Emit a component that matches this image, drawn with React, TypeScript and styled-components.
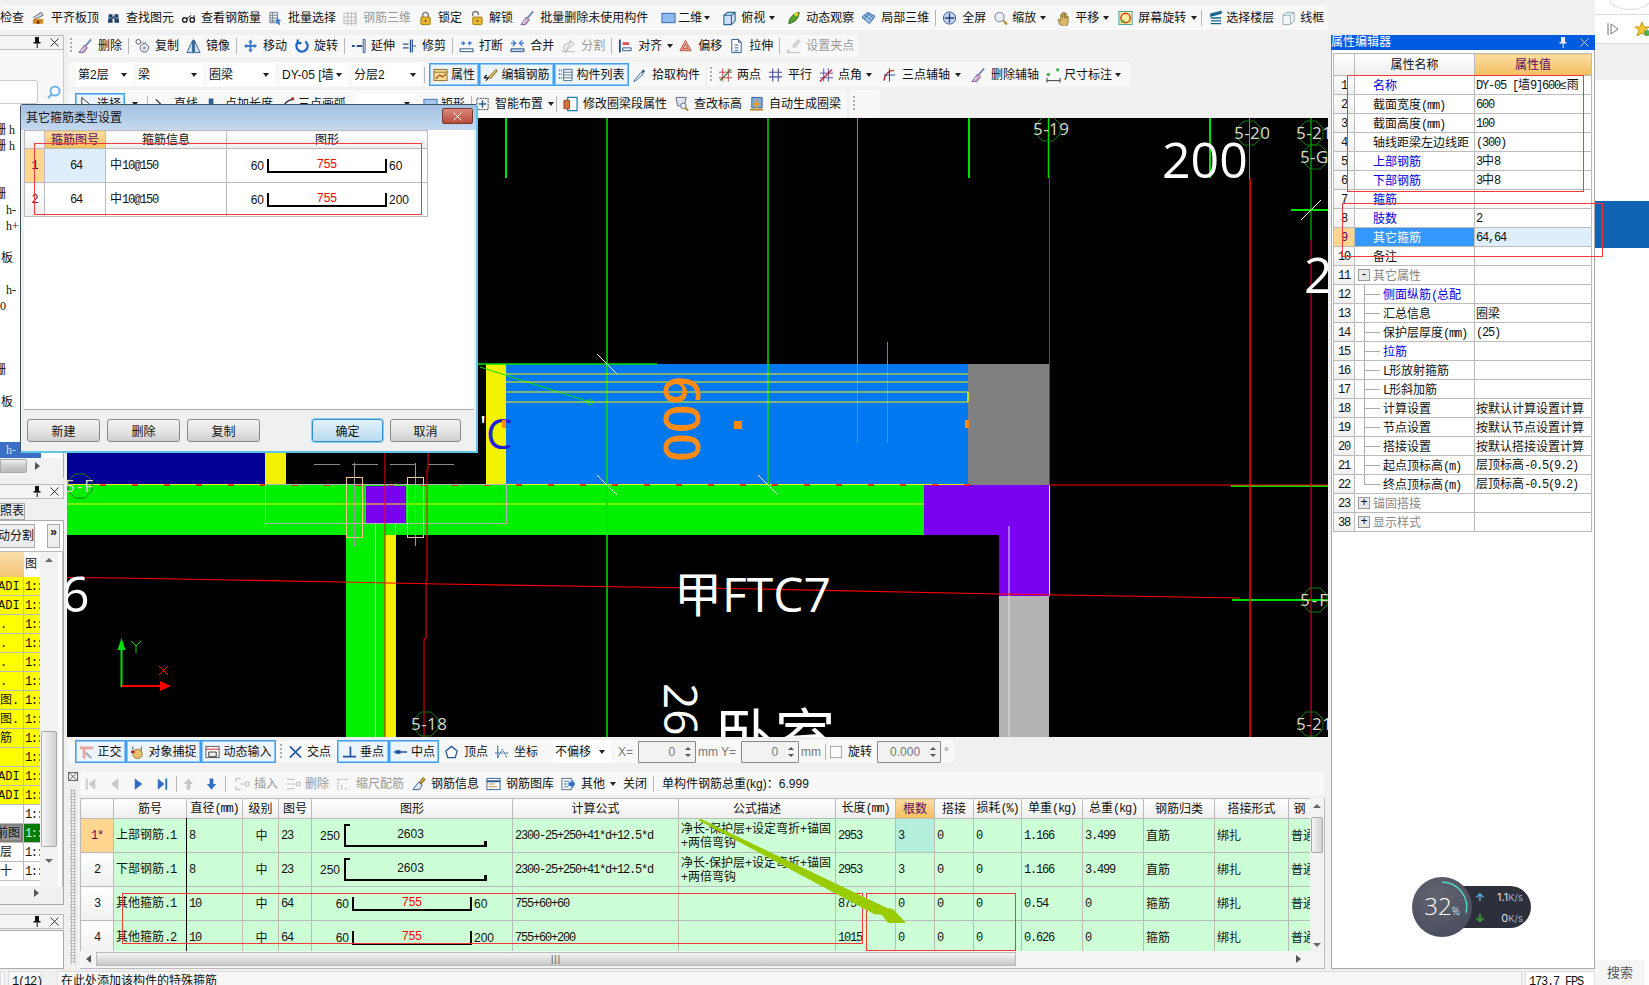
import React from 'react';
import styled, { createGlobalStyle } from 'styled-components';

const Global = createGlobalStyle`
  html, body { margin: 0; padding: 0; background: #f0f0f0; overflow: hidden; }
  * { box-sizing: border-box; }
  #root { width: 1649px; height: 985px; }
`;
const FONT = `"Liberation Sans", "Noto Sans CJK SC", sans-serif`;

const Page = styled.div`position: relative; width: 1649px; height: 985px; overflow: hidden; display: flex; background: #f0f0f0; font: 12px/16px ${FONT}; color: #111;`;
const Shell = styled.div`width: 1595px; height: 985px; display: flex; flex-direction: column;`;
const TopBar = styled.div`height: 35px; padding: 5px 267px 5px 0; flex: none;`;
const Band = styled.div<{ $w?: number; $h: number; $gap?: number; $pl?: number; $mt?: number }>`
  display: flex; align-items: center; height: ${p => p.$h}px; width: ${p => (p.$w ? p.$w + 'px' : 'auto')}; margin-top: ${p => p.$mt ?? 0}px;
  gap: ${p => p.$gap ?? 7}px; padding-left: ${p => p.$pl ?? 0}px; background: #f8f8f8; border-radius: 3px; white-space: nowrap; flex: none; overflow: hidden;
`;
const Body = styled.div`height: 935px; display: flex; flex: none;`;
const Center = styled.div`width: 1264px; padding: 0 3px 0 0; display: flex; flex-direction: column; margin-left: 3px;`;
const BandRow = styled.div<{ $mt?: number; $gap?: number }>`display: flex; margin: ${p => p.$mt ?? 0}px 0 0 1px; gap: ${p => p.$gap ?? 2}px; flex: none;`;
const Grip = styled.i`flex: none; width: 2px; height: 16px; margin: 0 -1px 0 -1px; background-image: linear-gradient(#aaa 50%, transparent 50%); background-size: 2px 4px;`;
const Sep = styled.i<{ $ml?: number }>`flex: none; width: 1px; height: 16px; margin: 0 -1px 0 ${p => p.$ml ?? -1}px; background: #b5b5b5;`;
const ToolItem = styled.span<{ $gray?: boolean; $g?: number; $ml?: number }>`display: inline-flex; align-items: center; gap: ${p => p.$g ?? 5}px; flex: none; margin-left: ${p => p.$ml ?? 0}px; color: ${p => (p.$gray ? '#9a9a9a' : '#111')};`;
const CaretMark = styled.i<{ $r?: number }>`flex: none; width: 0; height: 0; margin: 0 ${p => p.$r ?? 3}px 0 0; border: 3px solid transparent; border-top: 4px solid #222; border-bottom: 0;`;
const IconSvg = styled.svg`width: 15px; height: 16px; flex: none; display: block;`;
const SelectBox = styled.span<{ $w: number; $ml?: number }>`display: flex; align-items: center; justify-content: space-between; flex: none; width: ${p => p.$w}px; height: 23px; padding: 0 3px 0 2px; margin-left: ${p => p.$ml ?? 0}px; background: #fff; font-size: 12px; overflow: hidden;`;
const Toggle = styled.span<{ $w: number; $on?: boolean; $ml?: number }>`
  display: inline-flex; align-items: center; justify-content: center; gap: 3px; flex: none; width: ${p => p.$w}px; height: 23px; margin-left: ${p => p.$ml ?? 0}px;
  border: 1px solid #3c9ff2; background: #edf4fb; box-shadow: inset 0 0 0 1px #8ec6f6;
`;
const ToggleGroup = styled.span<{ $ml?: number }>`display: inline-flex; flex: none; margin-left: ${p => p.$ml ?? 0}px;`;

/* icons ----------------------------------------------------------------- */
const icons: Record<string, React.ReactNode> = {
  level: <><path d="M2 9h11v5H2z" fill="#d98a20" /><path d="M3 7l8-5 2 3-8 4z" fill="#d8d8e4" stroke="#667" /><path d="M6 11h3v3H6z" fill="#7a3b10" /></>,
  binoc: <><path d="M2 13l1-9h4v9zM9 13V4h4l1 9z" fill="#20406a" /><path d="M3 8h3M10 8h3" stroke="#9fc0e0" /><path d="M7 6h2v3H7z" fill="#446" /></>,
  specs: <><circle cx="4" cy="10" r="2.4" fill="none" stroke="#111" strokeWidth="1.4" /><circle cx="12" cy="10" r="2.4" fill="none" stroke="#111" strokeWidth="1.4" /><path d="M6 9l5-4M14 8V5" stroke="#111" /></>,
  batch: <><path d="M2 2h8v11H2zM2 5h8M2 8h8M2 11h8M5 2v11" fill="none" stroke="#667a8c" /><path d="M9 8l5 3-2 1 1 3-1 .5-2-2-1 1z" fill="#2b7bd0" /></>,
  grid3: <path d="M1 3h13v11H1zM5 1v15M9 1v15M13 1v15M1 7h13M1 11h13" fill="none" stroke="#bbb" />,
  lock: <><path d="M5 8V5a3 3 0 0 1 6 0v3" fill="none" stroke="#777" strokeWidth="1.5" /><rect x="3" y="7" width="10" height="8" rx="1" fill="#e6b830" stroke="#a07b10" /><path d="M8 10v2" stroke="#633" strokeWidth="1.5" /></>,
  unlock: <><path d="M4 6V4a3 3 0 0 1 6 0v1" fill="none" stroke="#777" strokeWidth="1.5" /><rect x="4" y="7" width="10" height="8" rx="1" fill="#e6b830" stroke="#a07b10" /><path d="M9 10v2" stroke="#633" strokeWidth="1.5" /></>,
  broom: <><path d="M14 1L8 8" stroke="#6b86b8" strokeWidth="2" /><path d="M7 7l3 3-4 5H1z" fill="#c9a9d0" stroke="#7a5a90" /><path d="M3 14l3-4" stroke="#fff" /></>,
  plane: <rect x="1" y="3" width="14" height="10" fill="#8fb8ee" stroke="#2f64b8" />,
  cube: <path d="M2 5l4-3h8v9l-4 4H2zM2 5h8v10M10 5l4-3" fill="#cfe2f4" stroke="#2d6a96" strokeWidth="1.2" />,
  orbit: <><path d="M3 14C3 8 8 3 14 2c0 6-5 11-11 12z" fill="#5ba02c" stroke="#2b6a20" /><circle cx="11" cy="4" r="2" fill="#e4d420" /></>,
  cube3: <path d="M1 7l6-5 8 4-6 8zM4 5l7 5M7 3l6 5M3 9l6-6" fill="#a5c5ea" stroke="#2f64a8" />,
  full: <><circle cx="8" cy="8" r="6.5" fill="#c9d7ee" stroke="#33558f" /><path d="M8 3v10M3 8h10" stroke="#25447e" strokeWidth="1.4" /></>,
  zoom: <><circle cx="7" cy="7" r="5" fill="#e4eef9" stroke="#778" /><path d="M11 11l4 4" stroke="#b08920" strokeWidth="2.2" /></>,
  hand: <path d="M4 15l-2-5 2-1 1 2V4h2v4-6h2v6-5h2v6-3h2v7l-2 5z" fill="#d8b76c" stroke="#8a6a28" strokeWidth=".8" />,
  screen: <><rect x="1" y="1" width="14" height="14" fill="#fff1a0" stroke="#34a0a0" /><circle cx="8" cy="8" r="5" fill="none" stroke="#d83020" strokeWidth="1.5" /><path d="M3 10h4v3H3z" fill="#58b050" /></>,
  layers: <><path d="M3 4l11-3v2L3 6zM3 8h11M3 11h11M3 14h11" fill="#1a8aa0" stroke="#17628a" strokeWidth="1.4" /></>,
  wire: <path d="M2 5l4-3h8v9l-4 4H2zM2 5h8v10M10 5l4-3" fill="#f4f7fa" stroke="#8faabb" />,
  copy: <><rect x="1" y="1" width="5" height="5" rx="2.5" fill="none" stroke="#556" /><circle cx="10" cy="10" r="4.5" fill="none" stroke="#556" /><circle cx="10" cy="10" r="2" fill="#9ac" /><path d="M7 4h5" stroke="#667" strokeDasharray="1 1" /></>,
  mirror: <path d="M7 2v13H1zM9 2v13h6zM8 1v15" fill="#d0e0f2" stroke="#2c5e94" />,
  move: <path d="M8 1l2.5 3H9v3h3V5.500L15 8l-3 2.500V9H9v3h1.500L8 15l-2.500-3H7V9H4v1.500L1 8l3-2.500V7h3V4H5.500z" fill="#3a78c8" />,
  rot: <path d="M12 3a6 6 0 1 1-8 1M4 1v4h4" fill="none" stroke="#1e66c8" strokeWidth="2.4" />,
  extend: <><path d="M13 1h2v14h-2z" fill="#fff" stroke="#26528a" /><path d="M1 8h3M6 8h6" stroke="#26528a" strokeWidth="2" /></>,
  trim: <path d="M9 1v14M11 1v14M1 6h6M1 10h6M12 8h3" stroke="#26528a" strokeWidth="1.3" />,
  brk: <><path d="M1 11h14v3H1z" fill="#fff" stroke="#26528a" /><path d="M2 5h4M10 5h4M4 3l2 2-2 2M12 3l-2 2 2 2" fill="none" stroke="#3a78c8" strokeWidth="1.3" /></>,
  merge: <><path d="M1 11h14v3H1z" fill="#c4d8f0" stroke="#26528a" /><path d="M1 5h4M11 5h4M3 2l3 3-3 3M13 2l-3 3 3 3" fill="none" stroke="#3a78c8" strokeWidth="1.3" /></>,
  split: <path d="M1 14h14M3 14V7l8-4 3 3-7 6zM11 1l-6 14" fill="#eee" stroke="#bbb" />,
  alignl: <><path d="M2 1v14" stroke="#26528a" strokeWidth="2" /><path d="M5 4h7v3H5z" fill="#e05050" /><path d="M5 10h9v3H5z" fill="#fff" stroke="#26528a" /></>,
  offset: <path d="M8 2l6 11H2zM8 6l3 5H5z" fill="#f4b8a8" stroke="#b04a3a" strokeLinejoin="round" />,
  stretch: <path d="M3 1h7l3 3v11H3zM10 1v3h3M6 7h4M6 10h4M6 13h4" fill="#fff" stroke="#26528a" />,
  gripgray: <><path d="M13 1L7 8l2 2 6-7zM1 15h14" fill="#ddd" stroke="#bbb" /><path d="M1 12h3v3H1z" fill="#ccc" /></>,
  props: <><rect x="1" y="2" width="14" height="12" fill="#f4dc9c" stroke="#8a6a28" /><path d="M1 5h14" stroke="#8a6a28" /><path d="M3 12l4-4 3 2 4-3" stroke="#b05a10" fill="none" strokeWidth="1.4" /></>,
  edit: <><path d="M1 11h5l-3 3M1 11l3-3" fill="none" stroke="#111" strokeWidth="1.2" /><path d="M6 10L14 2l1 2-7 8z" fill="#e7c66a" stroke="#7a5a10" /></>,
  list: <><path d="M6 2h9v12H6zM6 5h9M6 8h9M6 11h9" fill="#fff" stroke="#4a6a90" /><path d="M1 3h3M1 7h3M1 11h3" stroke="#4a6a90" strokeDasharray="1 1" strokeWidth="2" /></>,
  dropper: <><path d="M3 13l7-8 2 2-8 7-2 1z" fill="#fff" stroke="#2c5e94" /><path d="M10 4l2-2 2 2-2 2z" fill="#2c5e94" /></>,
  twod: <><path d="M5 1v14M11 1v14M1 5h14M1 11h14" stroke="#c04040" /><path d="M2 14L14 2" stroke="#208030" strokeWidth="1.4" /></>,
  para: <path d="M5 1v14M11 1v14M1 5h14M1 10h14" stroke="#4d4d9c" strokeWidth="1.2" />,
  ang: <><path d="M5 1v14M10 1v14M1 6h14M1 11h14" stroke="#5050a0" /><path d="M1 15L14 2" stroke="#d02020" strokeWidth="1.5" /></>,
  three: <><path d="M2 14C3 7 7 3 13 3" fill="none" stroke="#c02020" strokeWidth="1.4" /><path d="M8 1v14M2 8h12" stroke="#20409a" /></>,
  dim: <><path d="M1 14h14M1 11v5M15 11v5" stroke="#333" /><rect x="1" y="6" width="3" height="3" fill="#30b040" /><rect x="11" y="1" width="3" height="3" fill="#30b040" /></>,
  arrow: <path d="M3 1v12l3-3 2 5 2-1-2-5h4z" fill="#fff" stroke="#223" />,
  line: <path d="M2 3l11 11" stroke="#223" strokeWidth="1.3" />,
  ptlen: <><path d="M4 2h5v6H4z" fill="#2c5e94" /><path d="M6 8v6M12 8v4" stroke="#c02020" strokeWidth="2" /></>,
  arc: <><path d="M2 14C4 7 8 4 13 3" fill="none" stroke="#223" strokeWidth="1.3" /><rect x="12" y="1" width="3" height="3" fill="#c02020" /><rect x="1" y="12" width="3" height="3" fill="#c02020" /></>,
  rect: <rect x="1" y="3" width="14" height="10" fill="#a8c6ec" stroke="#4070b0" />,
  smart: <><path d="M2 2h12v12H2z" fill="none" stroke="#333" strokeDasharray="2 1" /><path d="M8 4v8M4 8h8" stroke="#2c5e94" strokeWidth="1.5" /></>,
  modify: <><path d="M5 1h10v14H5z" fill="#fff" stroke="#1a80a8" strokeWidth="1.3" /><path d="M1 4h6v9H1z" fill="#d8703a" stroke="#8a4a20" /></>,
  elev: <><path d="M2 1h11l-2 9H4z" fill="#dde6f0" stroke="#667" /><circle cx="10" cy="10" r="3" fill="#eef" stroke="#667" /><path d="M12 12l3 3" stroke="#b8881c" strokeWidth="2" /></>,
  auto: <><path d="M3 1h11v11H3z" fill="#88acd8" stroke="#2c5e94" /><path d="M1 14h14" stroke="#c08020" strokeWidth="2" /><path d="M8 4v8M4 8h8" stroke="#e0a030" strokeWidth="2.4" /></>,
  ortho: <><path d="M1 2h14v3H1zM4 5h3v10H4z" fill="#e8a8a0" /><path d="M8 8l6 6-2 1-5-5z" fill="#9ab" /></>,
  snap: <><path d="M3 2v6M12 2v6" stroke="#555" /><circle cx="8" cy="10" r="5" fill="#e4c070" stroke="#9a7a30" /><path d="M1 8h4" stroke="#c02020" strokeWidth="2" /></>,
  dyn: <><rect x="1" y="2" width="14" height="12" fill="#fff" stroke="#555" /><path d="M1 5h14" stroke="#c02020" /><path d="M4 8h8v5H4z" fill="#eee" stroke="#333" /></>,
  cross: <path d="M2 2l12 12M14 2L2 14" stroke="#1c5aa0" strokeWidth="1.7" />,
  perp: <path d="M1 13h14M9 2v11" stroke="#1c5aa0" strokeWidth="1.8" />,
  mid: <><path d="M1 8h14" stroke="#1c5aa0" strokeWidth="1.5" /><rect x="3" y="6" width="5" height="4" fill="#1c5aa0" /></>,
  vertex: <path d="M8 2l6 5-2 7H4L2 7z" fill="#fff" stroke="#1c5aa0" strokeWidth="1.4" />,
  coord: <><path d="M4 14l5-9 5 9M1 9h14" fill="none" stroke="#1c5aa0" strokeDasharray="2 1" /><path d="M4 14V1" stroke="#1c5aa0" /></>,
  first: <><path d="M3 2h2v12H3z" fill="#c8c8c8" /><path d="M13 2v12L6 8z" fill="#c8c8c8" /></>,
  prev: <path d="M12 2v12L4 8z" fill="#c8c8c8" />,
  next: <path d="M4 2v12l8-6z" fill="#2f6fc6" />,
  last: <><path d="M11 2h2v12h-2z" fill="#2f6fc6" /><path d="M3 2v12l7-6z" fill="#2f6fc6" /></>,
  up: <path d="M8 2l5 6h-3v6H6V8H3z" fill="#c8c8c8" />,
  down: <path d="M8 14l5-6h-3V2H6v6H3z" fill="#2f6fc6" />,
  insert: <path d="M1 2h5M1 14h5M1 2v4M1 10v4M6 8h4M11 6h4v4h-4z" fill="none" stroke="#b5b5b5" />,
  del: <path d="M1 3h8M1 8h4M1 13h8M6 8h4M11 6h4v4h-4z" fill="none" stroke="#b5b5b5" />,
  scale: <path d="M2 14V3M2 3h11M6 14V8M10 14v-3M14 14v-1" stroke="#aaa" strokeDasharray="2 1" />,
  info: <><path d="M2 14l6-8 4 3-3 5z" fill="#dfe8f3" stroke="#2c5e94" /><path d="M9 6l4-5 2 2-4 5z" fill="#d8a040" stroke="#7a5a10" /></>,
  lib: <><rect x="1" y="2" width="14" height="12" fill="#fff" stroke="#2c5e94" /><path d="M1 5h14" stroke="#2c5e94" strokeWidth="2" /><path d="M3 8h6M3 11h9" stroke="#c08020" /></>,
  other: <><path d="M1 2h10v12H1z" fill="#fff" stroke="#4a6a90" /><path d="M3 5h6M3 8h4M3 11h5" stroke="#4a6a90" /><path d="M8 6h4V3l3 5-3 5v-3H8z" fill="#2f6fc6" /></>,
};
const Ic = ({ k }: { k: string }) => <IconSvg viewBox="0 0 16 16">{icons[k]}</IconSvg>;
const Caret = ({ r }: { r?: number }) => <CaretMark $r={r} />;
const Item = ({ ic, t, caret, gray, g, cr, ml }: { ic?: string; t: string; caret?: boolean; gray?: boolean; g?: number; cr?: number; ml?: number }) => (
  <ToolItem $gray={gray} $g={g} $ml={ml}>
    {ic && <Ic k={ic} />}
    <span>{t}</span>
    {caret && <Caret r={cr} />}
  </ToolItem>
);

/* left dock ------------------------------------------------------------- */
const Dock = styled.div`width: 64px; flex: none; display: flex; flex-direction: column;`;
const DockTitle = styled.div<{ $mt?: number }>`display: flex; align-items: center; justify-content: flex-end; gap: 8px; height: 15px; margin-top: ${p => p.$mt ?? 0}px; padding-right: 4px; border: 1px solid #bdbdbd; border-left: 0; background: #f4f4f4; flex: none;`;
const PinGlyph = styled.svg`width: 10px; height: 11px;`;
const CloseGlyph = styled.svg`width: 9px; height: 9px;`;
const Pin = () => <PinGlyph viewBox="0 0 10 11"><path d="M3 0h4v5h1.500v1.500H5.700V11h-1V6.500H1.500V5H3z" fill="#111" /></PinGlyph>;
const X = ({ c = '#333' }: { c?: string }) => <CloseGlyph viewBox="0 0 9 9"><path d="M.5.5l8 8M8.500.5l-8 8" stroke={c} /></CloseGlyph>;
const SearchZone = styled.div`height: 54px; flex: none; background: #f8f8f8; padding: 29px 0 0; display: flex; gap: 4px; align-items: center; border-right: 1px solid #ccc;`;
const SearchField = styled.div`width: 38px; height: 24px; background: #fff; border: 1px solid #ccc; border-left: 0; border-radius: 0 3px 3px 0;`;
const Glass = styled.svg`width: 16px; height: 16px; margin-left: 4px;`;
const Tree = styled.div`height: 354px; flex: none; background: #fff; padding-top: 18px; border-right: 1px solid #aaa; overflow: hidden;`;
const TreeRow = styled.div<{ $x: number; $on?: boolean }>`height: 16px; line-height: 16px; padding-left: ${p => Math.max(p.$x, 0)}px; text-indent: ${p => Math.min(p.$x, 0)}px; white-space: nowrap; overflow: hidden; width: ${p => (p.$on ? 41 : 63)}px; background: ${p => (p.$on ? '#3a6fc4' : 'transparent')}; color: ${p => (p.$on ? '#dde' : '#111')}; font-family: "Liberation Serif", "Noto Sans CJK SC", serif;`;
const TreeScroll = styled.div`height: 20px; flex: none; display: flex; align-items: center; background: #f2f2f2; border-right: 1px solid #aaa; padding-bottom: 4px;`;
const HThumb = styled.div<{ $w: number }>`width: ${p => p.$w}px; height: 14px; background: linear-gradient(#eee, #c8c8c8 60%, #bbb); border: 1px solid #aaa; border-radius: 0 2px 2px 0;`;
const ArrowR = styled.i`width: 0; height: 0; border: 4px solid transparent; border-left: 5px solid #555; border-right: 0; margin-left: 8px;`;
const ArrowL = styled.i`width: 0; height: 0; border: 4px solid transparent; border-right: 5px solid #555; border-left: 0; margin-left: 6px;`;
const TabStrip = styled.div`height: 21px; padding-top: 4px; flex: none;`;
const TabLabel = styled.div`width: 25px; height: 17px; overflow: hidden; background: #e8e8e8; border: 1px solid #aaa; border-left: 0; line-height: 15px; white-space: nowrap;`;
const CompPanel = styled.div`height: 385px; flex: none; border: 1px solid #aaa; border-left: 0; background: #fff; padding-top: 3px; display: flex; flex-direction: column;`;
const CompBtns = styled.div`display: flex; justify-content: space-between; height: 24px; padding-right: 3px; flex: none;`;
const SplitBtn = styled.div`width: 35px; height: 24px; background: #eee; border: 1px solid #aaa; border-left: 0; line-height: 22px; overflow: hidden; direction: rtl; white-space: nowrap;`;
const MoreBtn = styled.div`width: 13px; height: 24px; background: #eee; border: 1px solid #aaa; line-height: 14px; text-align: center; font-weight: bold;`;
const CompInner = styled.div`flex: 1; margin-top: 3px; display: flex; min-height: 0; border: 1px solid #bbb; border-left: 0; border-bottom: 0; overflow: hidden;`;
const CompTable = styled.div`width: 40px; flex: none;`;
const CompHead = styled.div`display: grid; grid-template-columns: 24px 16px; height: 25px;`;
const CompHeadA = styled.div`background: linear-gradient(#fbe0ac, #f4c477);`;
const CompHeadB = styled.div`background: #fff; overflow: hidden; line-height: 24px; padding-left: 1px; white-space: nowrap;`;
const CompRow = styled.div`display: grid; grid-template-columns: 24px 16px; height: 19px;`;
const CompA = styled.div<{ $c: string; $x: number; $sel?: boolean }>`background: ${p => p.$c}; border-bottom: 1px solid #bbb; border-right: 1px solid #bbb; text-indent: ${p => p.$x}px; overflow: hidden; white-space: nowrap; line-height: 20px; font-family: "Liberation Mono", "Noto Sans CJK SC", monospace; font-size: 12px; color: #111; ${p => (p.$sel ? 'box-shadow: inset 0 0 0 2px #808080; background:#9a9a9a;' : '')}`;
const CompB = styled.div<{ $c: string }>`background: ${p => p.$c}; color: ${p => (p.$c === '#087a08' ? '#cfc' : '#111')}; border-bottom: 1px solid #bbb; overflow: hidden; white-space: nowrap; line-height: 20px; padding-left: 1px; font-family: "Liberation Mono", monospace; font-size: 12px; letter-spacing: -1.400px;`;
const VScroll = styled.div`width: 18px; flex: none; background: #f2f2f2; display: flex; flex-direction: column; align-items: center; position: relative;`;
const ArrowU = styled.i`width: 0; height: 0; border: 4px solid transparent; border-bottom: 4px solid #666; border-top: 0; margin: 6px 0;`;
const ArrowD = styled.i<{ $auto?: boolean }>`width: 0; height: 0; border: 4px solid transparent; border-top: 4px solid #666; border-bottom: 0; ${p => (p.$auto ? 'margin-top: auto; margin-bottom: 4px;' : '')}`;
const VThumb = styled.div<{ $mt: number; $h: number; $w: number }>`width: ${p => p.$w}px; height: ${p => p.$h}px; margin-top: ${p => p.$mt}px; margin-bottom: 12px; background: linear-gradient(90deg, #f5f5f5, #d0d0d0); border: 1px solid #aaa; border-radius: 2px; flex: none;`;
const CompHBar = styled.div`height: 18px; flex: none; display: flex; align-items: center; justify-content: flex-end; padding: 0 24px 4px 0; background: #f0f0f0; margin-top: auto;`;
const MiniBox = styled.div`height: 39px; flex: none; margin-top: 1px; background: #fff; border: 1px solid #aaa; border-left: 0;`;

/* canvas ---------------------------------------------------------------- */
const CanvasBox = styled.svg`display: block; width: 1261px; height: 619px; background: #000; flex: none; margin-top: 0;`;
const BigText = styled.text`font-family: "Open Sans", "Noto Sans CJK SC", sans-serif; fill: #fff;`;
const AxisNote = ({ x, y, t }: { x: number; y: number; t: string }) => (
  <g>
    <path d={`M${x - 5},${y - 12}h10l7,7v10l-7,7h-10l-7,-7v-10z`} fill="none" stroke="#0a7d0a" />
    <text x={x - 15} y={y + 6} fill="#d8d8c8" fontSize="17" fontFamily='"Liberation Sans Narrow","Open Sans",sans-serif' textLength={t.length > 3 ? 36 : 28} lengthAdjust="spacing">{t}</text>
  </g>
);
const ln = (x1: number, y1: number, x2: number, y2: number, c: string, w = 1) => <line x1={x1} y1={y1} x2={x2} y2={y2} stroke={c} strokeWidth={w} />;
const Canvas = () => {
  const dashes: number[] = [];
  for (let x = 100; x < 968; x += 32) dashes.push(x);
  return (
    <CanvasBox viewBox="67 118 1261 619">
      <rect x="67" y="360" width="198" height="124" fill="#000094" />
      <rect x="265" y="360" width="21" height="124" fill="#f2f200" />
      <rect x="486" y="364" width="20" height="120" fill="#f2f200" />
      <rect x="506" y="364" width="462" height="121" fill="#0078f0" />
      <rect x="968" y="364" width="81" height="121" fill="#808080" />
      <rect x="67" y="485" width="857" height="50" fill="#00f000" />
      <path d="M924 485h125v111h-50v-61h-75z" fill="#7a00f0" />
      <rect x="999" y="596" width="50" height="141" fill="#b4b4b4" />
      <rect x="346" y="535" width="49" height="202" fill="#00f000" />
      <rect x="385" y="535" width="10" height="202" fill="#f2f200" />
      <rect x="366" y="486" width="40" height="38" fill="#7a00f0" />
      {ln(1009, 526, 1009, 737, '#ddd')}
      {ln(1049.5, 485, 1049.5, 596, '#eee')}
      {ln(67, 504, 924, 504, '#f2f200')}
      {ln(67, 484.500, 968, 484.500, '#f2f200')}
      {dashes.map(x => <line key={x} x1={x} y1="485" x2={x + 6} y2="485" stroke="#f00" strokeWidth="1.500" />)}
      {ln(268, 484.500, 286, 484.500, '#f00')}
      <rect x="265.500" y="484.500" width="241" height="39" fill="none" stroke="#b4b4b4" />
      <rect x="346.500" y="477.500" width="16" height="60" fill="none" stroke="#f4c48c" />
      <rect x="407.500" y="477.500" width="16" height="60" fill="none" stroke="#f4c48c" />
      {ln(354.500, 463, 354.500, 546, '#999')}
      {ln(415.500, 463, 415.500, 546, '#999')}
      {ln(375.500, 524, 375.500, 737, '#c8e8c8')}
      {ln(395.500, 524, 395.500, 737, '#d8d8a0')}
      <path d="M314 464.500h146" stroke="#888" strokeDasharray="26 12" />
      {ln(506, 118, 506, 178, '#00e000', 2)}
      {ln(607, 118, 607, 737, '#00e000', 1.500)}
      {ln(768, 118, 768, 485, '#00e000', 1.500)}
      {ln(857.500, 118, 857.500, 443, '#00e000')}
      {ln(887.500, 342, 887.500, 443, '#00e000')}
      {ln(969, 118, 969, 178, '#00e000', 2)}
      {ln(1048.500, 118, 1048.500, 178, '#00e000', 1.500)}
      {ln(1210, 118, 1210, 178, '#00e000', 2)}
      {ln(1249.500, 118, 1249.500, 178, '#00e000')}
      {ln(1311, 118, 1311, 240, '#00e000')}
      {ln(1291, 210, 1328, 210, '#00e000', 2)}
      {ln(1231, 486, 1328, 486, '#00e000', 2)}
      {ln(1232, 600, 1328, 600, '#00e000', 2)}
      {ln(460, 364, 657, 364, '#00e000', 1.500)}
      {ln(480, 367, 590, 402, '#00e000')}
      <circle cx="590" cy="402" r="2.500" fill="none" stroke="#00e000" />
      {[374, 382, 392, 402].map(y => <g key={y}>{ln(506, y, 968, y, '#f2f200')}</g>)}
      {ln(968, 392, 968, 402, '#f2f200', 1.500)}
      {ln(385, 360, 385, 737, '#f00')}
      <polyline points="428,360 428,470 427,470 427,580 426,580 426,639 424,639 424,737" fill="none" stroke="#f00" />
      <polyline points="67,577.500 120,578 230,580 340,582 440,584 600,586.500 760,589 1000,594 1240,598" fill="none" stroke="#f00" strokeWidth="1.200" />
      {ln(1049.500, 178, 1049.500, 485, '#f00')}
      {ln(1250, 178, 1250, 737, '#f00', 1.500)}
      {ln(1311, 240, 1311, 737, '#e01020')}
      {ln(1049, 485, 1328, 485, '#f00')}
      {ln(597, 354, 617, 374, '#fff')}
      {ln(597, 475, 617, 495, '#fff')}
      {ln(758, 475, 778, 495, '#fff')}
      {ln(1301, 220, 1321, 200, '#fff')}
      <rect x="734" y="421" width="8" height="8" fill="#ff8a00" />
      <rect x="965" y="420" width="4" height="8" fill="#ff8a00" />
      <text x="486" y="449" fontSize="42" fill="#2222dd" fontFamily='"Open Sans",sans-serif'>C</text>
      <text x="486" y="436" fontSize="28" fill="#fff" fontFamily='"Open Sans",sans-serif' dx="-6">'</text>
      <rect x="502" y="420" width="4" height="8" fill="#ff8a00" />
      <text x="0" y="0" transform="translate(664 376) rotate(90)" fontSize="50" fontWeight="600" fill="#ff8a14" fontFamily='"Open Sans",sans-serif'>600</text>
      <BigText x="1162" y="178" fontSize="50">200</BigText>
      <BigText x="1304" y="293" fontSize="50">2</BigText>
      <BigText x="61" y="612" fontSize="50">6</BigText>
      <BigText x="674" y="612" fontSize="48">甲FTC7</BigText>
      <BigText x="715" y="759" fontSize="60">卧室</BigText>
      <BigText transform="translate(664 683) rotate(90)" fontSize="46">26</BigText>
      <AxisNote x={1048} y={129} t="5-19" />
      <AxisNote x={1249} y={133} t="5-20" />
      <AxisNote x={1311} y={133} t="5-21" />
      <AxisNote x={1315} y={157} t="5-G" />
      <AxisNote x={80} y={486} t="5-F" />
      <AxisNote x={1315} y={600} t="5-F" />
      <AxisNote x={426} y={724} t="5-18" />
      <AxisNote x={1311} y={724} t="5-21" />
      <path d="M120.500 687V650h-3l4-12 4 12h-3v37z" fill="#00e000" />
      <path d="M122 685h38v-4l11 5-11 5v-4h-38z" fill="#f00" />
      <path d="M131 641l5 5 5-5M136 646v7" fill="none" stroke="#00e000" />
      <path d="M159 666l9 9M168 666l-9 9" stroke="#f00" />
    </CanvasBox>
  );
};

/* snap + rebar ---------------------------------------------------------- */
const SpinInput = styled.span<{ $w: number; $ml?: number }>`display: inline-flex; align-items: center; justify-content: flex-end; flex: none; width: ${p => p.$w}px; height: 22px; margin-left: ${p => p.$ml ?? 0}px; background: #f2f2f2; border: 1px solid #888; padding-right: 4px; gap: 10px; color: #777; border-radius: 1px;`;
const Spin = styled.span`display: flex; flex-direction: column; gap: 4px;`;
const Up = styled.i`display: block; width: 0; height: 0; border: 3px solid transparent; border-bottom: 3px solid #555; border-top: 0;`;
const Dn = styled.i`display: block; width: 0; height: 0; border: 3px solid transparent; border-top: 3px solid #555; border-bottom: 0;`;
const Spinner = ({ w, v, ml }: { w: number; v: string; ml?: number }) => <SpinInput $w={w} $ml={ml}><span>{v}</span><Spin><Up /><Dn /></Spin></SpinInput>;
const GrayText = styled.span<{ $ml?: number }>`color: #777; flex: none; margin-left: ${p => p.$ml ?? 0}px;`;
const Check = styled.i`flex: none; width: 12px; height: 12px; border: 1px solid #aaa; background: #fff;`;
const RotLabel = styled.span`flex: none; margin-left: 1px;`;
const SnapRow = styled.div`height: 31px; padding: 3px 0 5px 1px; display: flex; flex: none;`;
const RebarPanel = styled.div`height: 202px; flex: none; display: flex;`;
const RebarGrip = styled.div`width: 13px; flex: none; padding: 4px 0 0 1px; display: flex; flex-direction: column; gap: 2px;`;
const CloseBox = styled.i`display: flex; align-items: center; justify-content: center; width: 10px; height: 9px; border: 1px solid #666; background: #eee; flex: none;`;
const Dots = styled.i`flex: 1; margin: 6px 0 6px 2px; width: 6px; background-image: radial-gradient(#bbb 1px, transparent 1.200px); background-size: 3px 3px;`;
const RebarMain = styled.div`flex: 1; min-width: 0; display: flex; flex-direction: column; margin-right: 3px;`;
const NavBtn = styled.span<{ $ml?: number }>`flex: none; width: 15px; margin-left: ${p => p.$ml ?? 0}px; display: flex;`;
const TotalText = styled.span`margin-left: 2px; font-size: 12px;`;
const RebarFrame = styled.div`margin-top: 3px; height: 171px; border: 1px solid #bbb; border-top: 0; border-left: 0; display: flex; flex-direction: column; background: #f4f4f4; flex: none;`;
const RebarScroller = styled.div`height: 153px; display: flex; flex: none;`;
const RebarClip = styled.div`position: relative; width: 1230px; height: 153px; overflow: hidden; flex: none;`;
const FrozenLine = styled.i`position: absolute; left: 106px; top: 20px; bottom: 0; width: 1px; background: #000;`;
const Sheet = styled.table<{ $w: number }>`table-layout: fixed; border-collapse: collapse; width: ${p => p.$w}px; font: 12px/14px ${FONT}; color: #111;`;
const Cell = styled.td<{ $bg?: string; $center?: boolean; $c?: string; $pl?: number }>`
  border: 1px solid #bbb; padding: 0 0 0 ${p => p.$pl ?? 2}px; overflow: hidden; white-space: nowrap; background: ${p => p.$bg ?? '#ccffd6'}; color: ${p => p.$c ?? '#111'}; text-align: ${p => (p.$center ? 'center' : 'left')};
`;
const HeadCell = styled.th<{ $on?: boolean; $h?: number }>`
  border: 1px solid #bbb; padding: 0; overflow: hidden; white-space: nowrap; font-weight: normal; height: ${p => p.$h ?? 20}px;
  background: ${p => (p.$on ? 'linear-gradient(#fbdda2, #f3be5e)' : 'linear-gradient(#fff, #eee)')}; color: ${p => (p.$on ? '#5c0a5c' : '#111')};
`;
const RowNum = styled.td<{ $on?: boolean; $c?: string }>`
  border: 1px solid #bbb; padding: 0; text-align: center; background: ${p => (p.$on ? '#ffd58f' : 'linear-gradient(#fff, #efefef)')}; color: ${p => p.$c ?? '#111'};
`;
const BodyRow = styled.tr`height: 34px;`;
const Lat = styled.span`font-family: "Liberation Mono", monospace; letter-spacing: -1.2px; font-size: 12px;`;
const m = (s: string) => s.split(/([\x20-\x7e]+)/).map((p, i) => (i % 2 ? <Lat key={i}>{p}</Lat> : p));
const ShapeWrap = styled.div`display: flex; align-items: center; height: 100%;`;
const ShapeLabel = styled.span<{ $w: number; $right?: boolean }>`width: ${p => p.$w}px; flex: none; text-align: ${p => (p.$right ? 'right' : 'left')}; font-family: "Liberation Sans Narrow", "Liberation Sans", sans-serif; font-size: 12px;`;
const Stirrup = styled.div`width: 120px; height: 14px; margin: 0 2px 0 3px; border: solid #000; border-width: 0 2px 2px; color: #f00; text-align: center; line-height: 11px; flex: none;`;
const Hook = styled.div`position: relative; width: 143px; height: 23px; margin-left: 4px; padding-right: 12px; border: solid #000; border-width: 0 0 2px 2px; text-align: center; line-height: 20px; flex: none;
  &::before { content: ''; position: absolute; left: -2px; top: 0; width: 4px; height: 4px; border: solid #000; border-width: 2px 0 0 2px; }
  &::after { content: ''; position: absolute; right: 0; bottom: 0; width: 3px; height: 4px; background: #000; }
`;
const ScrollRail = styled.div`width: 13px; flex: none; display: flex; flex-direction: column; align-items: center; background: #f2f2f2;`;
const HBar = styled.div`height: 16px; display: flex; align-items: center; flex: none; padding-left: 0; background: #f4f4f4;`;
const HThumbLong = styled.div`width: 920px; height: 14px; margin-left: 5px; background: linear-gradient(#f4f4f4, #c8c8c8); border: 1px solid #bbb; display: flex; align-items: center; justify-content: center; flex: none; font-size: 9px; color: #555; letter-spacing: 1px;`;
const ArrowRMargin = styled(ArrowR)`margin-left: 280px;`;

/* property panel -------------------------------------------------------- */
const Prop = styled.div`width: 264px; flex: none; height: 934px; display: flex; flex-direction: column; border-right: 1px solid #aaa; border-left: 1px solid #aaa; border-bottom: 1px solid #aaa; background: #fff;`;
const PropTitle = styled.div`height: 15px; flex: none; background: #005be0; color: #fff; display: flex; align-items: center; justify-content: space-between; padding-right: 6px; line-height: 15px; margin: 0 -1px;`;
const PropTitleIcons = styled.span`display: flex; gap: 12px; align-items: center; filter: invert(1);`;
const PropBody = styled.div`padding: 3px 0 0 1px;`;
const PropSheet = styled(Sheet)`td { height: 19px; }`;
const NameCell = styled.td<{ $sel?: boolean; $blue?: boolean; $gray?: boolean; $x: number; $tree?: 'mid' | 'end' }>`
  position: relative; border: 1px solid #bbb; padding: 2px 0 0 ${p => p.$x}px; white-space: nowrap; overflow: hidden;
  background: ${p => (p.$sel ? '#3399ff' : '#fff')}; color: ${p => (p.$sel ? '#fff' : p.$blue ? '#0000e0' : p.$gray ? '#888' : '#111')};
  ${p => p.$tree && `&::before { content: ''; position: absolute; left: 9px; top: 0; bottom: ${p.$tree === 'end' ? '9px' : '0'}; width: 1px; background: #aaa; }
  &::after { content: ''; position: absolute; left: 9px; top: 9px; width: 16px; height: 1px; background: #aaa; }`}
`;
const Expander = styled.i`position: absolute; left: 3px; top: 3px; width: 12px; height: 12px; border: 1px solid #999; background: #e8e8e8; display: flex; align-items: center; justify-content: center; color: #111; font: 12px/10px "Liberation Mono", monospace; font-style: normal;`;
const ValCell = styled.td<{ $sel?: boolean }>`border: 1px solid #bbb; padding: 1px 0 0 1px; white-space: nowrap; overflow: hidden; background: ${p => (p.$sel ? '#deeefd' : '#fff')};`;

/* strip / status -------------------------------------------------------- */
const Strip = styled.div`width: 54px; height: 985px; flex: none; display: flex; flex-direction: column; background: #fff;`;
const StripTop = styled.div`height: 15px; flex: none; background: #fff; border-bottom: 1px solid #ddd; overflow: hidden; padding-left: 14px;`;
const Bubble = styled.i`display: block; width: 42px; height: 22px; margin-top: -12px; border: 1px solid #ddd; border-radius: 50%;`;
const StripIcons = styled.div`height: 29px; flex: none; display: flex; align-items: center; gap: 13px; padding-left: 10px; border-bottom: 1px solid #ddd; white-space: nowrap; overflow: hidden;`;
const StripIconSvg = styled.svg`width: 16px; height: 16px; flex: none;`;
const StripGray = styled.div`height: 36px; flex: none; background: #f0f0f0;`;
const StripWhite = styled.div<{ $h: number }>`height: ${p => p.$h}px; flex: none;`;
const StripBlue = styled.div`height: 47px; flex: none; background: #0f63b3;`;
const StripTab = styled.div`margin-top: auto; width: 50px; height: 25px; background: #f5f5f5; color: #555; text-align: center; line-height: 26px; font-size: 13px;`;
const Status = styled.div`height: 15px; flex: none; display: flex; gap: 3px; overflow: hidden; padding-top: 1px;`;
const StatusBox = styled.div<{ $w: number; $bg?: string; $ml?: number }>`width: ${p => p.$w}px; height: 20px; flex: none; margin-left: ${p => p.$ml ?? 0}px; border: 1px solid #ddd; background: ${p => p.$bg ?? '#f7f7f7'}; padding: 1px 0 0 3px; white-space: nowrap; line-height: 16px;`;

/* dialog ---------------------------------------------------------------- */
const Dialog = styled.div`position: absolute; left: 20px; top: 104px; width: 458px; height: 349px; z-index: 5; display: flex; flex-direction: column; background: #f0f0f0; border: 1px solid #40525f; border-right: 2px solid #5fc4e8; border-bottom: 2px solid #5fc4e8; border-radius: 3px 3px 0 0;`;
const DialogTitle = styled.div`height: 25px; flex: none; display: flex; align-items: center; justify-content: space-between; padding: 0 3px 0 5px; background: linear-gradient(#a4c0e0, #c4d9ef);`;
const DialogClose = styled.span`display: flex; align-items: center; justify-content: center; width: 31px; height: 16px; margin-top: -3px; border: 1px solid #7a3a32; border-radius: 2px; background: linear-gradient(#d9897c, #b84a3a);`;
const DialogClient = styled.div`height: 280px; flex: none; margin: 0 2px 0 3px; background: #fff; border-bottom: 1px solid #aaa;`;
const DialogBtns = styled.div`flex: 1; display: flex; padding: 9px 13px 0 6px; gap: 7px;`;
const DlgBtn = styled.button<{ $w: number; $on?: boolean; $ml?: number }>`
  width: ${p => p.$w}px; height: 23px; margin-left: ${p => p.$ml ?? 0}px; padding: 0; font: 12px ${FONT}; color: #111; border-radius: 3px; border: 1px solid ${p => (p.$on ? '#2f8fd0' : '#888')};
  background: ${p => (p.$on ? 'linear-gradient(#e4f2fb, #cde6f6 50%, #b8daf0)' : 'linear-gradient(#f4f4f4, #e6e6e6 50%, #cfcfcf)')};
  ${p => (p.$on ? 'box-shadow: 0 0 0 1px #8fcdf0;' : '')}
`;
const DlgCellBlue = styled(Cell)`text-align: center;`;

/* overlay --------------------------------------------------------------- */
const Overlay = styled.svg`position: absolute; left: 0; top: 0; width: 1649px; height: 985px; z-index: 6; pointer-events: none;`;
const Widget = styled.div`position: absolute; left: 1412px; top: 877px; z-index: 7; width: 120px; height: 60px; display: flex; align-items: center;`;
const Pill = styled.div`position: absolute; left: 26px; top: 9px; width: 93px; height: 42px; border-radius: 0 21px 21px 0; background: #2d303b; color: #ddd; display: grid; grid-template-rows: 1fr 1fr; padding-left: 37px; font: 11px "Inter", sans-serif;`;
const PillRow = styled.div`display: flex; align-items: center; justify-content: space-between; padding-right: 8px;`;
const PillUp = styled.span`color: #5ab0f0; font-weight: bold;`;
const PillDown = styled.span`color: #3ab03a; font-weight: bold;`;
const PillUnit = styled.span`color: #aab; font-size: 9.500px;`;
const Dial = styled.div`position: relative; width: 60px; height: 60px; border-radius: 50%; background: radial-gradient(circle at 40% 30%, #62656f, #44475a); color: #fff; display: flex; align-items: baseline; justify-content: center; font: 300 24px/58px "Open Sans", sans-serif;`;
const DialPct = styled.span`font-size: 10px; line-height: 10px;`;
const DialArc = styled.svg`position: absolute; inset: 0; width: 60px; height: 60px;`;
const Pct = styled.span``;

/* data ------------------------------------------------------------------ */
const treeRows: [string, number, boolean?][] = [
  ['栅 h', -6], ['栅 h', -6], ['', 0], ['', 0], ['栅', -6], ['  h-', 0], ['  h+', 0], ['', 0], ['板', 1], ['', 0],
  ['  h-', 0], ['0', 0], ['', 0], ['', 0], ['', 0], ['栅', -6], ['', 0], ['板', 1], ['', 0], ['', 0], ['  h-', 0, true],
];
const compRows: [string, number, string, string, boolean?][] = [
  ['ADI', -2, '#ff0', '#ff0'], ['ADI', -2, '#ff0', '#ff0'], ['.', 0, '#ff0', '#ff0'], ['.', 0, '#ff0', '#ff0'], ['.', 0, '#ff0', '#ff0'], ['.', 0, '#ff0', '#ff0'],
  ['图.', 0, '#ff0', '#ff0'], ['图.', 0, '#ff0', '#ff0'], ['筋', 0, '#ff0', '#ff0'], ['', 0, '#ff0', '#ff0'], ['ADI', -2, '#ff0', '#ff0'], ['ADI', -2, '#ff0', '#ff0'],
  ['', 0, '#fff', '#fff'], ['前图', -4, '#888', '#087a08', true], ['层', 0, '#fff', '#fff'], ['十', 0, '#fff', '#fff'],
];
const propRows: { n: string; name: string; val?: string; blue?: boolean; gray?: boolean; sel?: boolean; x?: number; tree?: 'mid' | 'end'; exp?: string }[] = [
  { n: '1', name: '名称', val: 'DY-05 [墙9]600≤雨', blue: true },
  { n: '2', name: '截面宽度(mm)', val: '600' },
  { n: '3', name: '截面高度(mm)', val: '100' },
  { n: '4', name: '轴线距梁左边线距', val: ' (300)' },
  { n: '5', name: '上部钢筋', val: '3中8', blue: true },
  { n: '6', name: '下部钢筋', val: '3中8', blue: true },
  { n: '7', name: '箍筋', blue: true },
  { n: '8', name: '肢数', val: '2', blue: true },
  { n: '9', name: '其它箍筋', val: '64,64', sel: true },
  { n: '10', name: '备注' },
  { n: '11', name: '其它属性', gray: true, exp: '-' },
  { n: '12', name: '侧面纵筋(总配', blue: true, x: 28, tree: 'mid' },
  { n: '13', name: '汇总信息', val: '圈梁', x: 28, tree: 'mid' },
  { n: '14', name: '保护层厚度(mm)', val: ' (25)', x: 28, tree: 'mid' },
  { n: '15', name: '拉筋', blue: true, x: 28, tree: 'mid' },
  { n: '16', name: 'L形放射箍筋', x: 28, tree: 'mid' },
  { n: '17', name: 'L形斜加筋', x: 28, tree: 'mid' },
  { n: '18', name: '计算设置', val: '按默认计算设置计算', x: 28, tree: 'mid' },
  { n: '19', name: '节点设置', val: '按默认节点设置计算', x: 28, tree: 'mid' },
  { n: '20', name: '搭接设置', val: '按默认搭接设置计算', x: 28, tree: 'mid' },
  { n: '21', name: '起点顶标高(m)', val: '层顶标高-0.5(9.2)', x: 28, tree: 'mid' },
  { n: '22', name: '终点顶标高(m)', val: '层顶标高-0.5(9.2)', x: 28, tree: 'end' },
  { n: '23', name: '锚固搭接', gray: true, exp: '+' },
  { n: '38', name: '显示样式', gray: true, exp: '+' },
];
const rebarCols = [33, 73, 56, 36, 33, 201, 166, 157, 60, 39, 39, 48, 61, 61, 71, 74, 22];
const rebarHead = ['', '筋号', '直径(mm)', '级别', '图号', '图形', '计算公式', '公式描述', '长度(mm)', '根数', '搭接', '损耗(%)', '单重(kg)', '总重(kg)', '钢筋归类', '搭接形式', '钢'];
const desc = <>净长-保护层+设定弯折+锚固<br />+两倍弯钩</>;
const rebarRows = [
  { n: '1*', on: true, name: '上部钢筋.1', d: '8', no: '23', hook: true, l: '250', mid: '2603', f: '2300-25+250+41*d+12.5*d', desc, len: '2953', cnt: '3', one: '1.166', all: '3.499', cat: '直筋' },
  { n: '2', name: '下部钢筋.1', d: '8', no: '23', hook: true, l: '250', mid: '2603', f: '2300-25+250+41*d+12.5*d', desc, len: '2953', cnt: '3', one: '1.166', all: '3.499', cat: '直筋' },
  { n: '3', name: '其他箍筋.1', d: '10', no: '64', l: '60', r: '60', mid: '755', f: '755+60+60', len: '875', cnt: '0', one: '0.54', all: '0', cat: '箍筋' },
  { n: '4', name: '其他箍筋.2', d: '10', no: '64', l: '60', r: '200', mid: '755', f: '755+60+200', len: '1015', cnt: '0', one: '0.626', all: '0', cat: '箍筋' },
];

const Colgroup = ({ w }: { w: number[] }) => <colgroup>{w.map((v, i) => <col key={i} width={v} />)}</colgroup>;

export default function App() {
  return (
    <Page>
      <Global />
      <Shell>
        <TopBar>
          <Band $h={25}>
            <Item t="检查" />
            <Item ic="level" t="平齐板顶" />
            <Item ic="binoc" t="查找图元" />
            <Item ic="specs" t="查看钢筋量" />
            <Item ic="batch" t="批量选择" />
            <Item ic="grid3" t="钢筋三维" gray />
            <Item ic="lock" t="锁定" />
            <Item ic="unlock" t="解锁" />
            <Item ic="broom" t="批量删除未使用构件" />
            <Item ic="plane" t="二维" caret g={2} cr={5} ml={6} />
            <Item ic="cube" t="俯视" caret g={4} cr={4} />
            <Item ic="orbit" t="动态观察" />
            <Item ic="cube3" t="局部三维" />
            <Sep />
            <Item ic="full" t="全屏" />
            <Item ic="zoom" t="缩放" caret g={4} cr={3} />
            <Item ic="hand" t="平移" caret g={4} cr={2} />
            <Item ic="screen" t="屏幕旋转" caret cr={-2} />
            <Sep />
            <Item ic="layers" t="选择楼层" g={3} />
            <Item ic="wire" t="线框" g={4} />
          </Band>
        </TopBar>
        <Body>
          <Dock>
            <DockTitle><Pin /><X /></DockTitle>
            <SearchZone>
              <SearchField />
              <Glass viewBox="0 0 16 16"><circle cx="9" cy="7" r="4.500" fill="#fff" stroke="#6fb3e8" strokeWidth="2" /><path d="M6 10l-4 4" stroke="#6fb3e8" strokeWidth="2" /></Glass>
            </SearchZone>
            <Tree>
              {treeRows.map((r, i) => <TreeRow key={i} $x={r[1]} $on={r[2]}>{r[0].replace(/ /g, '\u00a0')}</TreeRow>)}
            </Tree>
            <TreeScroll><HThumb $w={27} /><ArrowR /></TreeScroll>
            <DockTitle $mt={6}><Pin /><X /></DockTitle>
            <TabStrip><TabLabel>照表</TabLabel></TabStrip>
            <CompPanel>
              <CompBtns><SplitBtn>动分割</SplitBtn><MoreBtn>»</MoreBtn></CompBtns>
              <CompInner>
                <CompTable>
                  <CompHead><CompHeadA /><CompHeadB>图</CompHeadB></CompHead>
                  {compRows.map((r, i) => (
                    <CompRow key={i}>
                      <CompA $c={r[2]} $x={r[1]} $sel={r[4]}>{r[0]}</CompA>
                      <CompB $c={r[3]}>1::</CompB>
                    </CompRow>
                  ))}
                </CompTable>
                <VScroll><ArrowU /><VThumb $mt={163} $h={116} $w={16} /><ArrowD /></VScroll>
              </CompInner>
              <CompHBar><ArrowR /></CompHBar>
            </CompPanel>
            <DockTitle $mt={9}><Pin /><X /></DockTitle>
            <MiniBox />
          </Dock>
          <Center>
            <BandRow>
              <Band $h={22} $w={790} $pl={3}>
                <Grip />
                <Item ic="broom" t="删除" />
                <Sep />
                <Item ic="copy" t="复制" />
                <Item ic="mirror" t="镜像" />
                <Sep />
                <Item ic="move" t="移动" />
                <Item ic="rot" t="旋转" />
                <Sep />
                <Item ic="extend" t="延伸" />
                <Item ic="trim" t="修剪" />
                <Sep />
                <Item ic="brk" t="打断" />
                <Item ic="merge" t="合并" />
                <Item ic="split" t="分割" gray />
                <Sep />
                <Item ic="alignl" t="对齐" caret cr={-2} />
                <Item ic="offset" t="偏移" />
                <Item ic="stretch" t="拉伸" />
                <Sep />
                <Item ic="gripgray" t="设置夹点" gray />
              </Band>
            </BandRow>
            <BandRow $mt={5}>
              <Band $h={25} $w={637} $gap={3} $pl={8}>
                <SelectBox $w={57}><span>第2层</span><Caret /></SelectBox>
                <SelectBox $w={67}><span>梁</span><Caret /></SelectBox>
                <SelectBox $w={68} $ml={1}><span>圈梁</span><Caret /></SelectBox>
                <SelectBox $w={68} $ml={2}><span>DY-05 [墙</span><Caret /></SelectBox>
                <SelectBox $w={70} $ml={1}><span>分层2</span><Caret /></SelectBox>
                <Sep />
                <ToggleGroup $ml={2}>
                  <Toggle $w={50}><Ic k="props" /><span>属性</span></Toggle>
                  <Toggle $w={75}><Ic k="edit" /><span>编辑钢筋</span></Toggle>
                  <Toggle $w={75}><Ic k="list" /><span>构件列表</span></Toggle>
                </ToggleGroup>
                <Item ic="dropper" t="拾取构件" />
              </Band>
              <Band $h={25} $w={423} $pl={4}>
                <Grip />
                <Item ic="twod" t="两点" g={4} />
                <Item ic="para" t="平行" />
                <Item ic="ang" t="点角" caret g={4} />
                <Item ic="three" t="三点辅轴" caret />
                <Item ic="broom" t="删除辅轴" />
                <Item ic="dim" t="尺寸标注" caret g={3} />
              </Band>
            </BandRow>
            <BandRow $mt={3} $gap={3}>
              <Band $h={28} $w={779} $pl={7}>
                <Toggle $w={50}><Ic k="arrow" /><span>选择</span></Toggle>
                <Caret />
                <Sep />
                <Item ic="line" t="直线" />
                <Item ic="ptlen" t="点加长度" />
                <Item ic="arc" t="三点画弧" g={3} />
                <SelectBox $w={60} $ml={3}><span /><Caret /></SelectBox>
                <Item ic="rect" t="矩形" g={3} />
                <Sep />
                <Item ic="smart" t="智能布置" caret cr={-4} ml={-3} />
                <Sep />
                <Item ic="modify" t="修改圈梁段属性" />
                <Item ic="elev" t="查改标高" />
                <Item ic="auto" t="自动生成圈梁" />
              </Band>
              <Band $h={28} $w={30} $pl={4}><Grip /></Band>
            </BandRow>
            <Canvas />
            <SnapRow>
              <Band $h={23} $w={886} $pl={7} $gap={5}>
                <ToggleGroup>
                  <Toggle $w={51}><Ic k="ortho" /><span>正交</span></Toggle>
                  <Toggle $w={75}><Ic k="snap" /><span>对象捕捉</span></Toggle>
                  <Toggle $w={75}><Ic k="dyn" /><span>动态输入</span></Toggle>
                </ToggleGroup>
                <Grip />
                <Item ic="cross" t="交点" g={4} ml={2} />
                <ToggleGroup $ml={1}>
                  <Toggle $w={52}><Ic k="perp" /><span>垂点</span></Toggle>
                  <Toggle $w={50}><Ic k="mid" /><span>中点</span></Toggle>
                </ToggleGroup>
                <Item ic="vertex" t="顶点" />
                <Item ic="coord" t="坐标" g={5} ml={1} />
                <SelectBox $w={58} $ml={10}><span>不偏移</span><Caret /></SelectBox>
                <GrayText $ml={2}>X=</GrayText>
                <Spinner w={58} v="0" />
                <GrayText $ml={-3}>mm</GrayText>
                <GrayText $ml={-2}>Y=</GrayText>
                <Spinner w={58} v="0" />
                <GrayText $ml={-3}>mm</GrayText>
                <Sep $ml={-1} />
                <Check />
                <RotLabel>旋转</RotLabel>
                <Spinner w={64} v="0.000" />
                <GrayText $ml={-2}>°</GrayText>
              </Band>
            </SnapRow>
            <RebarPanel>
              <RebarGrip>
                <CloseBox><X c="#555" /></CloseBox>
                <Dots />
              </RebarGrip>
              <RebarMain>
                <Band $h={23} $w={1244} $gap={7} $pl={3} $mt={4}>
                  <NavBtn><Ic k="first" /></NavBtn>
                  <NavBtn $ml={2}><Ic k="prev" /></NavBtn>
                  <NavBtn $ml={2}><Ic k="next" /></NavBtn>
                  <NavBtn $ml={2}><Ic k="last" /></NavBtn>
                  <Sep />
                  <NavBtn $ml={-2}><Ic k="up" /></NavBtn>
                  <NavBtn $ml={1}><Ic k="down" /></NavBtn>
                  <Sep />
                  <Item ic="insert" t="插入" gray g={4} ml={3} />
                  <Item ic="del" t="删除" gray g={4} ml={1} />
                  <Item ic="scale" t="缩尺配筋" gray />
                  <Item ic="info" t="钢筋信息" />
                  <Item ic="lib" t="钢筋图库" />
                  <Item ic="other" t="其他" caret cr={0} />
                  <Item t="关闭" />
                  <Sep />
                  <TotalText>单构件钢筋总重(kg)：6.999</TotalText>
                </Band>
                <RebarFrame>
                  <RebarScroller>
                    <RebarClip>
                      <Sheet $w={1230}>
                        <Colgroup w={rebarCols} />
                        <thead>
                          <tr>{rebarHead.map((h, i) => <HeadCell key={i} $on={h === '根数'}>{m(h)}</HeadCell>)}</tr>
                        </thead>
                        <tbody>
                          {rebarRows.map((r, i) => (
                            <BodyRow key={i}>
                              <RowNum $on={r.on} $c={r.on ? '#5c0a5c' : undefined}>{m(r.n)}</RowNum>
                              <Cell>{m(r.name)}</Cell>
                              <Cell>{m(r.d)}</Cell>
                              <Cell $center>中</Cell>
                              <Cell>{m(r.no)}</Cell>
                              <Cell $pl={0}>
                                <ShapeWrap>
                                  {r.hook ? (
                                    <>
                                      <ShapeLabel $w={28} $right>{r.l}</ShapeLabel>
                                      <Hook>{r.mid}</Hook>
                                    </>
                                  ) : (
                                    <>
                                      <ShapeLabel $w={37} $right>{r.l}</ShapeLabel>
                                      <Stirrup>{r.mid}</Stirrup>
                                      <ShapeLabel $w={30}>{r.r}</ShapeLabel>
                                    </>
                                  )}
                                </ShapeWrap>
                              </Cell>
                              <Cell>{m(r.f)}</Cell>
                              <Cell>{r.desc}</Cell>
                              <Cell>{m(r.len)}</Cell>
                              <Cell $bg={i === 0 ? '#b4efdc' : undefined}>{m(r.cnt)}</Cell>
                              <Cell>{m('0')}</Cell>
                              <Cell>{m('0')}</Cell>
                              <Cell>{m(r.one)}</Cell>
                              <Cell>{m(r.all)}</Cell>
                              <Cell>{r.cat}</Cell>
                              <Cell>绑扎</Cell>
                              <Cell>普通</Cell>
                            </BodyRow>
                          ))}
                        </tbody>
                      </Sheet>
                      <FrozenLine />
                    </RebarClip>
                    <ScrollRail>
                      <ArrowU />
                      <VThumb $mt={3} $h={36} $w={12} />
                      <ArrowD $auto />
                    </ScrollRail>
                  </RebarScroller>
                  <HBar>
                    <ArrowL />
                    <HThumbLong>|||</HThumbLong>
                    <ArrowRMargin />
                  </HBar>
                </RebarFrame>
              </RebarMain>
            </RebarPanel>
          </Center>
          <Prop>
            <PropTitle>
              <span>属性编辑器</span>
              <PropTitleIcons>
                <Pin />
                <X />
              </PropTitleIcons>
            </PropTitle>
            <PropBody>
              <PropSheet $w={258}>
                <Colgroup w={[21, 120, 117]} />
                <thead>
                  <tr>
                    <HeadCell $h={22} />
                    <HeadCell $h={22}>属性名称</HeadCell>
                    <HeadCell $h={22} $on>属性值</HeadCell>
                  </tr>
                </thead>
                <tbody>
                  {propRows.map(r => (
                    <tr key={r.n}>
                      <RowNum $on={r.sel} $c={r.sel ? '#5c0a5c' : undefined}>{m(r.n)}</RowNum>
                      <NameCell $sel={r.sel} $blue={r.blue} $gray={r.gray} $x={r.x ?? 18} $tree={r.tree}>
                        {r.exp && <Expander>{r.exp}</Expander>}
                        {m(r.name)}
                      </NameCell>
                      <ValCell $sel={r.sel}>{m(r.val ?? '')}</ValCell>
                    </tr>
                  ))}
                </tbody>
              </PropSheet>
            </PropBody>
          </Prop>
        </Body>
        <Status>
          <StatusBox $w={3} />
          <StatusBox $w={34}>{m('1(12)')}</StatusBox>
          <StatusBox $w={1465} $ml={12}>在此处添加该构件的特殊箍筋</StatusBox>
          <StatusBox $w={70} $bg="#fff">{m('173.7 FPS')}</StatusBox>
        </Status>
      </Shell>
      <Strip>
        <StripTop><Bubble /></StripTop>
        <StripIcons>
          <StripIconSvg viewBox="0 0 16 16"><path d="M3 2v12M6 3l7 5-7 5z" fill="none" stroke="#777" /></StripIconSvg>
          <StripIconSvg viewBox="0 0 16 16"><path d="M8 1l2 5h5l-4 3 2 6-5-3-5 3 2-6-4-3h5z" fill="#f4c430" stroke="#c89a10" /><circle cx="13" cy="12" r="3" fill="#4caf50" /></StripIconSvg>
        </StripIcons>
        <StripGray />
        <StripWhite $h={121} />
        <StripBlue />
        <StripTab>搜索</StripTab>
      </Strip>

      <Dialog>
        <DialogTitle>
          <span>其它箍筋类型设置</span>
          <DialogClose><X c="#fff" /></DialogClose>
        </DialogTitle>
        <DialogClient>
          <Sheet $w={403}>
            <Colgroup w={[20, 61, 121, 201]} />
            <thead>
              <tr>
                <HeadCell $h={18} />
                <HeadCell $h={18} $on>箍筋图号</HeadCell>
                <HeadCell $h={18}>箍筋信息</HeadCell>
                <HeadCell $h={18}>图形</HeadCell>
              </tr>
            </thead>
            <tbody>
              {[{ n: '1', r: '60', on: true }, { n: '2', r: '200', on: false }].map(r => (
                <BodyRow key={r.n}>
                  <RowNum $on={r.on} $c="#5c0a5c">{m(r.n)}</RowNum>
                  <DlgCellBlue $bg={r.on ? '#deeefd' : '#fff'}>{m('64')}</DlgCellBlue>
                  <Cell $bg="#fff" $pl={4}>中{m('10@150')}</Cell>
                  <Cell $bg="#fff" $pl={0}>
                    <ShapeWrap>
                      <ShapeLabel $w={37} $right>60</ShapeLabel>
                      <Stirrup>755</Stirrup>
                      <ShapeLabel $w={30}>{r.r}</ShapeLabel>
                    </ShapeWrap>
                  </Cell>
                </BodyRow>
              ))}
            </tbody>
          </Sheet>
        </DialogClient>
        <DialogBtns>
          <DlgBtn $w={73}>新建</DlgBtn>
          <DlgBtn $w={73}>删除</DlgBtn>
          <DlgBtn $w={73}>复制</DlgBtn>
          <DlgBtn $w={71} $ml={45} $on>确定</DlgBtn>
          <DlgBtn $w={71}>取消</DlgBtn>
        </DialogBtns>
      </Dialog>

      <Overlay viewBox="0 0 1649 985">
        <g fill="none" stroke="#f23a3a">
          <rect x="34.500" y="143.500" width="387" height="71" />
          <rect x="1347.500" y="75.500" width="236" height="116" />
          <rect x="1342.500" y="203.500" width="260" height="53" />
          <rect x="122.500" y="893.500" width="740" height="50" />
          <rect x="866.500" y="893.500" width="149" height="57" />
        </g>
        <path d="M698 820l3-1 186 89 6 1 13 14h-18l-6-8-8-1z" fill="#99cc00" />
      </Overlay>

      <Widget>
        <Pill>
          <PillRow><PillUp>↑</PillUp><Pct>1.1<PillUnit>K/s</PillUnit></Pct></PillRow>
          <PillRow><PillDown>↓</PillDown><Pct>0<PillUnit>K/s</PillUnit></Pct></PillRow>
        </Pill>
        <Dial>
          32<DialPct>%</DialPct>
          <DialArc viewBox="0 0 60 60"><path d="M30 5A25 25 0 0 1 54 36" fill="none" stroke="#4fd8b8" strokeWidth="1.500" /></DialArc>
        </Dial>
      </Widget>
    </Page>
  );
}
